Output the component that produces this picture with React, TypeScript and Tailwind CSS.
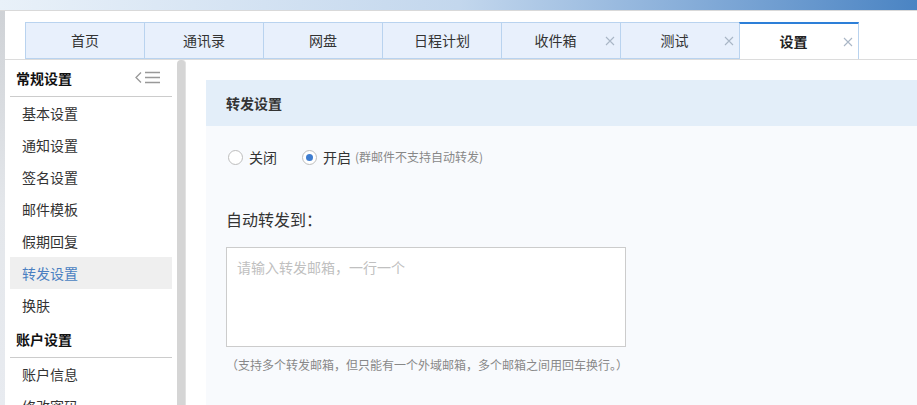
import React from "react";

const tabs = [
  { label: "首页", close: false },
  { label: "通讯录", close: false },
  { label: "网盘", close: false },
  { label: "日程计划", close: false },
  { label: "收件箱", close: true },
  { label: "测试", close: true },
  { label: "设置", close: true, active: true },
];

const general = ["基本设置", "通知设置", "签名设置", "邮件模板", "假期回复", "转发设置", "换肤"];
const account = ["账户信息", "修改密码"];

const font = { fontFamily: '"Noto Sans CJK SC", "Noto Sans", sans-serif' };

function CloseX() {
  return (
    <svg width="10" height="10" viewBox="0 0 10 10" className="absolute right-[5px] top-1/2 -translate-y-1/2">
      <path d="M1 1 L9 9 M9 1 L1 9" stroke="#a9b6c6" strokeWidth="1.1" fill="none" />
    </svg>
  );
}

function CollapseIcon() {
  return (
    <svg width="26" height="14" viewBox="0 0 26 14">
      <path d="M6 1.5 L1 6.5 L6 11.5" stroke="#999" strokeWidth="1.3" fill="none" />
      <path d="M10 1.5 H25 M10 6.5 H25 M10 11.5 H25" stroke="#999" strokeWidth="1.6" fill="none" />
    </svg>
  );
}

const App: React.FC = () => {
  return (
    <div className="w-[917px] h-[405px] overflow-hidden bg-white flex flex-col text-[#333]" style={font}>
      {/* top banner strip */}
      <div className="h-[10px] shrink-0 bg-gradient-to-r from-[#e9f1f9] via-[#c3d7ed] to-[#4a84c3] border-b border-[#d9d9d9] box-content" />

      <div className="flex flex-1 min-h-0">
        <div className="w-[5px] shrink-0 bg-gradient-to-b from-[#cfd2d6] via-[#e4e7eb] to-[#e8ebf0]" />

        <div className="flex-1 flex flex-col min-w-0">
          {/* tabs */}
          <div className="h-[49px] shrink-0 pl-[20px] pt-[11px] flex border-b border-[#dcdcdc]">
            {tabs.map((t) => (
              <div
                key={t.label}
                className={`relative w-[120px] h-[37px] flex items-center justify-center text-[14px] border-l border-r border-[#b9d3ef] -mr-px ${
                  t.close ? "pr-[11px]" : ""
                } ${
                  t.active
                    ? "bg-white border-t-2 border-t-[#2d7fd8] font-bold text-[#222]"
                    : "bg-[#e8f0fc] border-t border-b border-[#b9d3ef]"
                }`}
              >
                {t.label}
                {t.close && <CloseX />}
              </div>
            ))}
          </div>

          <div className="flex flex-1 min-h-0">
            {/* sidebar */}
            <div className="w-[162px] ml-[5px] shrink-0 bg-white">
              <div className="h-[37px] flex items-center justify-between pl-[6px] pr-[11px] border-b border-[#cccccc]">
                <span className="text-[14px] font-bold text-[#111]">常规设置</span>
                <CollapseIcon />
              </div>
              {general.map((g) => (
                <div
                  key={g}
                  className={`h-[32px] flex items-center pl-[12px] text-[14px] ${
                    g === "转发设置" ? "bg-[#efefef] text-[#4a7fc1]" : "text-[#333]"
                  }`}
                >
                  {g}
                </div>
              ))}
              <div className="h-[37px] flex items-center pl-[6px] border-b border-[#cccccc]">
                <span className="text-[14px] font-bold text-[#111]">账户设置</span>
              </div>
              {account.map((g) => (
                <div key={g} className="h-[32px] flex items-center pl-[12px] text-[14px] text-[#333]">
                  {g}
                </div>
              ))}
            </div>

            {/* scrollbar */}
            <div className="w-[9px] ml-[5px] shrink-0 bg-[#d5d5d5] rounded-t-[4px] border-r border-[#e2e2e2]" />

            {/* content */}
            <div className="flex-1 ml-[20px] pt-[20px] min-w-0">
              <div className="h-[46px] bg-[#e3eef9] flex items-center pl-[20px]">
                <span className="text-[14px] font-bold text-[#333]">转发设置</span>
              </div>
              <div className="bg-[#f8fafd] h-[300px] pl-[20px] pt-[23px]">
                <div className="flex items-center h-[16px] text-[14px]">
                  <span className="w-[15px] h-[15px] rounded-full border border-[#bdbdbd] bg-white ml-[2px]" />
                  <span className="ml-[6px]">关闭</span>
                  <span className="ml-[25px] w-[15px] h-[15px] rounded-full border border-[#bdbdbd] bg-white flex items-center justify-center">
                    <span className="w-[7px] h-[7px] rounded-full bg-[#3f7dd0]" />
                  </span>
                  <span className="ml-[6px]">开启</span>
                  <span className="ml-[4px] text-[12px] text-[#888]">(群邮件不支持自动转发)</span>
                </div>

                <div className="mt-[42px] text-[16px] text-[#333] leading-[24px]">自动转发到：</div>

                <div className="mt-[16px] w-[400px] h-[100px] border border-[#cccccc] bg-white pl-[10px] pt-[6px]">
                  <span className="text-[14px] text-[#c0c0c0]">请输入转发邮箱，一行一个</span>
                </div>

                <div className="mt-[9px] text-[12px] text-[#888] leading-[18px]">
                  （支持多个转发邮箱，但只能有一个外域邮箱，多个邮箱之间用回车换行。）
                </div>
              </div>
            </div>
          </div>
        </div>
      </div>
    </div>
  );
};

export default App;
